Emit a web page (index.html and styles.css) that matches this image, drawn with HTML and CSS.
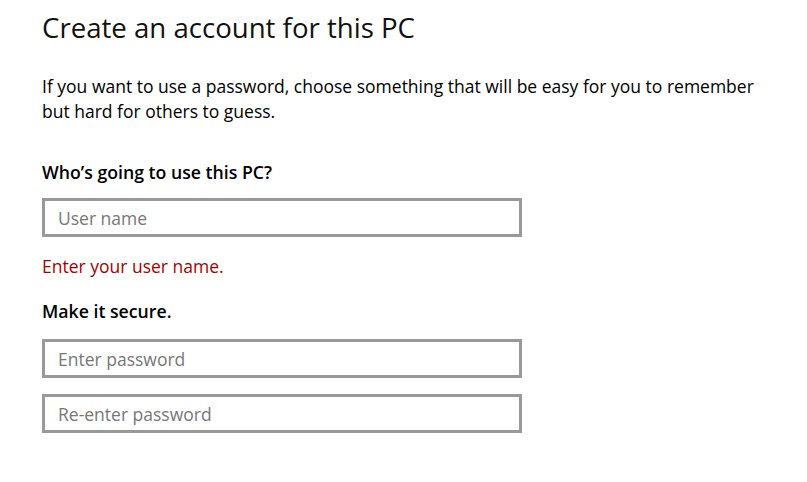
FILE: index.html
```html
<!DOCTYPE html>
<html lang="en">
<head>
  <meta charset="UTF-8">
  <title>Create an account for this PC</title>
  <link rel="stylesheet" href="styles.css">
</head>
<body>
  <div class="page">
    <h1>Create an account for this PC</h1>

    <p class="intro">If you want to use a password, choose something that will be easy for you to remember but hard for others to guess.</p>

    <label class="section" for="username">Who’s going to use this PC?</label>
    <input type="text" id="username" placeholder="User name">
    <div class="error">Enter your user name.</div>

    <label class="section secure" for="password">Make it secure.</label>
    <input type="password" id="password" placeholder="Enter password">
    <input type="password" id="password2" placeholder="Re-enter password">
  </div>
</body>
</html>
```

FILE: styles.css
```css
body {
  font-family: "Open Sans", "Noto Sans", sans-serif;
  margin: 0;
  background: #fff;
  color: #000;
}
.page {
  padding: 8px 0 0 42px;
  width: 725px;
}
h1 {
  font-weight: 400;
  font-size: 27.6px;
  line-height: 38px;
  margin: 0 0 28px 0;
  color: #111;
}
.intro {
  font-size: 17.5px;
  line-height: 25px;
  margin: 0 0 36px 0;
}
.section {
  display: block;
  font-weight: 600;
  font-size: 17.7px;
  line-height: 24px;
  margin-bottom: 14px;
}
.section.secure {
  margin-bottom: 16px;
}
input {
  display: block;
  width: 480px;
  height: 39px;
  margin: 0 0 16px 0;
  padding: 0 13px;
  font-family: inherit;
  font-size: 17.5px;
  border: 3px solid #999;
  box-sizing: border-box;
  outline: none;
}
input::placeholder {
  color: #777;
}
#username {
  margin-bottom: 17px;
}
.error {
  color: #a80000;
  font-size: 17.5px;
  line-height: 24px;
  margin: 0 0 21px 0;
}
```
